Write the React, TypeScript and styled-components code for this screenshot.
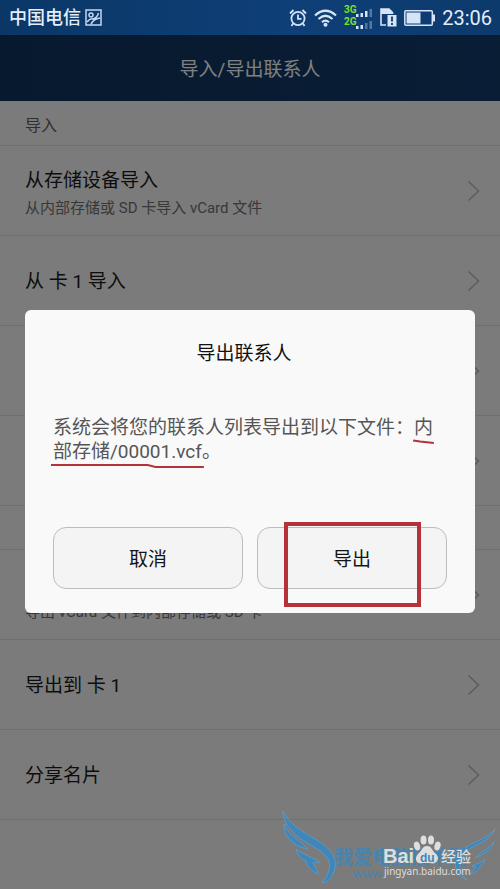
import React from "react";
import styled, { createGlobalStyle } from "styled-components";

const GlobalStyle = createGlobalStyle`
  *, *::before, *::after { box-sizing: border-box; }
  body {
    margin: 0;
    background: #f6f6f6;
    font-family: Roboto, "Noto Sans CJK SC", sans-serif;
  }
  h1, h2, p, ul { margin: 0; padding: 0; font-weight: 400; }
  button { font-family: inherit; cursor: pointer; }
`;

const Screen = styled.div`
  position: relative;
  display: flex;
  flex-direction: column;
  min-height: 100vh;
  overflow: hidden;
`;

const StatusBar = styled.div`
  display: flex;
  align-items: center;
  justify-content: space-between;
  height: 35px;
  padding: 0 8px 0 9px;
  background: linear-gradient(90deg, #0b3767, #0e3f77 60%, #0d3a6c);
  color: #e4eefa;
`;

const Carrier = styled.div`
  display: flex;
  align-items: center;
  gap: 4px;
  font-size: 18px;
  line-height: 24px;
  font-weight: 500;
`;

const Indicators = styled.div`
  display: flex;
  align-items: center;
  gap: 7px;
`;

const Clock = styled.time`
  font-size: 20px;
  line-height: 24px;
`;

const Content = styled.main`
  position: relative;
  flex: 1;
  background: #f6f6f6;
`;

const TitleBar = styled.header`
  display: flex;
  align-items: center;
  justify-content: center;
  height: 66px;
  padding-top: 3px;
  background: linear-gradient(90deg, #0f335c, #123b6b);
`;

const PageTitle = styled.h1`
  font-size: 19px;
  line-height: 28px;
  color: #fff;
`;

const SectionLabel = styled.h2`
  height: 45px;
  padding: 11px 25px 0;
  border-bottom: 1px solid #dedede;
  font-size: 16px;
  line-height: 28px;
  color: #606060;
`;

const SectionBreak = styled.div`
  height: 44px;
  border-bottom: 1px solid #dedede;
`;

const List = styled.ul`
  list-style: none;
`;

const Row = styled.button`
  display: flex;
  align-items: center;
  justify-content: space-between;
  width: 100%;
  min-height: 90px;
  padding: 0 20px 0 25px;
  border: 0;
  border-bottom: 1px solid #dedede;
  background: none;
  text-align: left;
`;

const RowText = styled.span<{ $double: boolean }>`
  display: flex;
  flex-direction: column;
  padding-top: ${(p) => (p.$double ? 6 : 2)}px;
`;

const RowTitle = styled.span`
  min-height: 28px;
  font-size: 19px;
  line-height: 28px;
  color: #1a1a1a;
`;

const RowNote = styled.span`
  font-size: 15px;
  line-height: 26px;
  color: #707070;
`;

const Backdrop = styled.div`
  position: absolute;
  inset: 0;
  display: flex;
  align-items: center;
  justify-content: center;
  padding: 0 25px 1px;
  background: rgba(0, 0, 0, 0.5);
`;

const Dialog = styled.section`
  display: flex;
  flex-direction: column;
  width: 100%;
  padding: 30px 28px 24px;
  border-radius: 6px;
  background: #f9f9f9;
`;

const DialogTitle = styled.h2`
  padding-right: 12px;
  font-size: 19px;
  line-height: 28px;
  text-align: center;
  color: #111;
`;

const Message = styled.p`
  margin: 48px 0 63px;
  font-size: 19px;
  line-height: 24px;
  color: #555;
`;

const Marked = styled.span`
  position: relative;
  white-space: nowrap;
`;

const PenStroke = styled.svg`
  position: absolute;
  left: -2px;
  bottom: -6px;
  width: calc(100% + 4px);
  height: 6px;
`;

const Actions = styled.div`
  display: grid;
  grid-template-columns: 1fr 1fr;
  gap: 14px;
`;

const ActionButton = styled.button`
  position: relative;
  height: 62px;
  padding: 3px 0 0;
  border: 1px solid #bcbcbc;
  border-radius: 13px;
  background: #f4f4f4;
  font-size: 19px;
  line-height: 28px;
  color: #151515;
`;

const Highlight = styled.span`
  position: absolute;
  inset: -6px 25px -19px 26px;
  border: 4px solid #b5323a;
`;

const Watermark = styled.svg`
  position: absolute;
  right: 0;
  bottom: 0;
  width: 230px;
  height: 99px;
  pointer-events: none;
`;

const PictureIcon = () => (
  <svg width="17" height="17" viewBox="0 0 17 17" fill="none" stroke="#c5d8f2" strokeWidth="1.5" aria-hidden="true">
    <rect x="1" y="1" width="15" height="15" />
    <circle cx="6" cy="6" r="2" />
    <path d="M2 13Q5 9 8 10Q12 9 13.500 4M6 15.500Q8 10 15 9" />
  </svg>
);

const AlarmIcon = () => (
  <svg width="18" height="18" viewBox="0 0 18 18" fill="none" stroke="#d5e4f6" strokeWidth="1.8" aria-hidden="true">
    <circle cx="9" cy="9.500" r="6.600" />
    <path d="M9 5.500V9.800H12.500M1 4.500 4.500 1M17 4.500 13.500 1M4 14.500 2.500 17M14 14.500 15.500 17" />
  </svg>
);

const WifiIcon = () => (
  <svg width="23" height="18" viewBox="0 0 23 18" fill="none" stroke="#d5e4f6" strokeWidth="2.200" aria-hidden="true">
    <path d="M1 6.500Q11.500-3 22 6.500M4.500 10Q11.500 3.500 18.500 10M8 13.200Q11.500 10 15 13.200" />
    <circle cx="11.500" cy="15.800" r="2" fill="#d5e4f6" stroke="none" />
  </svg>
);

const SignalIcon = () => (
  <svg width="29" height="26" viewBox="0 0 29 26" aria-label="3G 2G" role="img">
    <g fill="#7be02c" fontFamily="Roboto, sans-serif" fontSize="10" fontWeight="700">
      <text x="0" y="8">3G</text>
      <text x="0" y="20">2G</text>
    </g>
    <g fill="#d5e4f6">
      <path d="M12 9h2.500v3H12zM16.500 8H19v4h-2.500zM21 6h2.500v6H21zM12 21h2.500v3H12zM16.500 20H19v4h-2.500z" />
      <path opacity=".35" d="M25.500 4H28v8h-2.500zM21 18h2.500v6H21zM25.500 16H28v8h-2.500z" />
    </g>
  </svg>
);

const SimAlertIcon = () => (
  <svg width="17" height="19" viewBox="0 0 17 19" fill="none" aria-hidden="true">
    <path d="M6 17H1V1H9L12.500 4.500V6" stroke="#d5e4f6" strokeWidth="1.600" />
    <path d="M1 1H9L12.500 4.500V6H1z" fill="#d5e4f6" />
    <path d="M7.500 7H16.500V18.500H7.500z" fill="#d5e4f6" />
    <path d="M12 8.500V13.500M12 15V17" stroke="#0d3b70" strokeWidth="1.800" />
  </svg>
);

const BatteryIcon = () => (
  <svg width="31" height="16" viewBox="0 0 31 16" aria-hidden="true">
    <rect x=".8" y=".8" width="27.500" height="14.400" rx="1" fill="none" stroke="#d5e4f6" strokeWidth="1.500" />
    <rect x="2.500" y="2.500" width="14" height="11" fill="#d5e4f6" />
    <path d="M29 4.500h2v7h-2z" fill="#d5e4f6" />
  </svg>
);

const Chevron = () => (
  <svg width="13" height="22" viewBox="0 0 13 22" fill="none" stroke="#b8b8b8" strokeWidth="1.500" aria-hidden="true">
    <path d="M1.500 1.500 11.500 11 1.500 20.500" />
  </svg>
);

type Item = { title?: string; note?: string };

const importItems: Item[] = [
  { title: "从存储设备导入", note: "从内部存储或 SD 卡导入 vCard 文件" },
  { title: "从 卡 1 导入" },
  {},
  {},
];

const exportItems: Item[] = [
  { note: "导出 vCard 文件到内部存储或 SD 卡" },
  { title: "导出到 卡 1" },
  { title: "分享名片" },
];

const ItemList = ({ items }: { items: Item[] }) => (
  <List>
    {items.map((item, i) => (
      <li key={i}>
        <Row type="button">
          <RowText $double={Boolean(item.note)}>
            <RowTitle>{item.title}</RowTitle>
            {item.note && <RowNote>{item.note}</RowNote>}
          </RowText>
          <Chevron />
        </Row>
      </li>
    ))}
  </List>
);

const SiteWatermark = () => (
  <Watermark viewBox="0 0 230 99">
    <g fill="#3f87bb" stroke="#65a5cf" strokeWidth=".6">
      <path d="M13 21C19 35 34 42 48 51C62 60 68 69 64 81C61 90 56 93 52 93C58 85 62 77 58 69C52 58 31 53 21 40C16 34 13 28 13 21Z" />
      <path d="M14 34C18 45 31 51 38 59C26 57 13 48 14 34Z" />
      <path d="M26 59C34 65 42 67 50 72L43 73L49 84C40 81 37 76 36 71C31 69 28 65 26 59Z" />
      <path d="M225 39C221 49 210 53 201 58C193 63 189 70 190 78C191 84 194 88 197 90C187 86 183 77 187 67C193 53 217 51 225 39Z" />
      <path d="M224 52C221 61 212 65 205 68C212 61 219 59 224 52Z" />
      <path d="M215 69C211 74 206 73 202 76L206 77L200 84C207 82 209 78 210 76Q214 74 215 69Z" />
    </g>
    <g fill="#3f87bb" opacity=".85">
      <text x="64" y="74" fontFamily="'Noto Sans CJK SC', sans-serif" fontSize="19" fontWeight="700">
        我爱电脑技术网
      </text>
      <text x="83" y="88" fontFamily="'Liberation Sans', sans-serif" fontSize="13">
        www.
      </text>
    </g>
    <g fill="#dedede">
      <text x="113" y="73" fontFamily="'Liberation Sans', sans-serif" fontSize="20" fontWeight="700">
        Bai
      </text>
      <ellipse cx="147" cy="56" rx="3" ry="4.500" transform="rotate(-15 147 56)" />
      <ellipse cx="153.500" cy="50" rx="3" ry="4.500" />
      <ellipse cx="161" cy="50" rx="3" ry="4.500" />
      <ellipse cx="167.500" cy="56" rx="3" ry="4.500" transform="rotate(15 167.500 56)" />
      <path d="M157 56C162 56 162 61 166 64C171 69 166 75 160 73H153C146 75 144 68 148 64C152 61 152 56 157 56Z" />
    </g>
    <text x="150" y="72" fill="#3f87bb" fontFamily="'Liberation Sans', sans-serif" fontSize="12" fontWeight="700">
      du
    </text>
    <g fill="#dedede">
      <text x="171" y="72" fontFamily="'Noto Sans CJK SC', sans-serif" fontSize="15" fontWeight="500">
        经验
      </text>
      <text x="114" y="85" fontFamily="'Noto Sans', sans-serif" fontSize="10">
        jingyan.baidu.com
      </text>
    </g>
  </Watermark>
);

export default function App() {
  return (
    <Screen>
      <GlobalStyle />
      <StatusBar>
        <Carrier>
          中国电信
          <PictureIcon />
        </Carrier>
        <Indicators>
          <AlarmIcon />
          <WifiIcon />
          <SignalIcon />
          <SimAlertIcon />
          <BatteryIcon />
          <Clock>23:06</Clock>
        </Indicators>
      </StatusBar>

      <Content>
        <TitleBar>
          <PageTitle>导入/导出联系人</PageTitle>
        </TitleBar>
        <SectionLabel>导入</SectionLabel>
        <ItemList items={importItems} />
        <SectionBreak />
        <ItemList items={exportItems} />

        <Backdrop>
          <Dialog role="dialog" aria-modal="true" aria-labelledby="export-title">
            <DialogTitle id="export-title">导出联系人</DialogTitle>
            <Message>
              系统会将您的联系人列表导出到以下文件：
              <Marked>
                内
                <PenStroke viewBox="0 0 20 6" preserveAspectRatio="none" aria-hidden="true">
                  <path d="M1 1.500 7 2.500 19 4" fill="none" stroke="#b5323a" strokeWidth="2" />
                </PenStroke>
              </Marked>
              <Marked>
                部存储/00001.vcf
                <PenStroke viewBox="0 0 158 6" preserveAspectRatio="none" aria-hidden="true">
                  <path d="M0 2H100L108 4H158" fill="none" stroke="#b5323a" strokeWidth="2" />
                </PenStroke>
              </Marked>
              。
            </Message>
            <Actions>
              <ActionButton type="button">取消</ActionButton>
              <ActionButton type="button">
                导出
                <Highlight />
              </ActionButton>
            </Actions>
          </Dialog>
        </Backdrop>
      </Content>
      <SiteWatermark />
    </Screen>
  );
}
